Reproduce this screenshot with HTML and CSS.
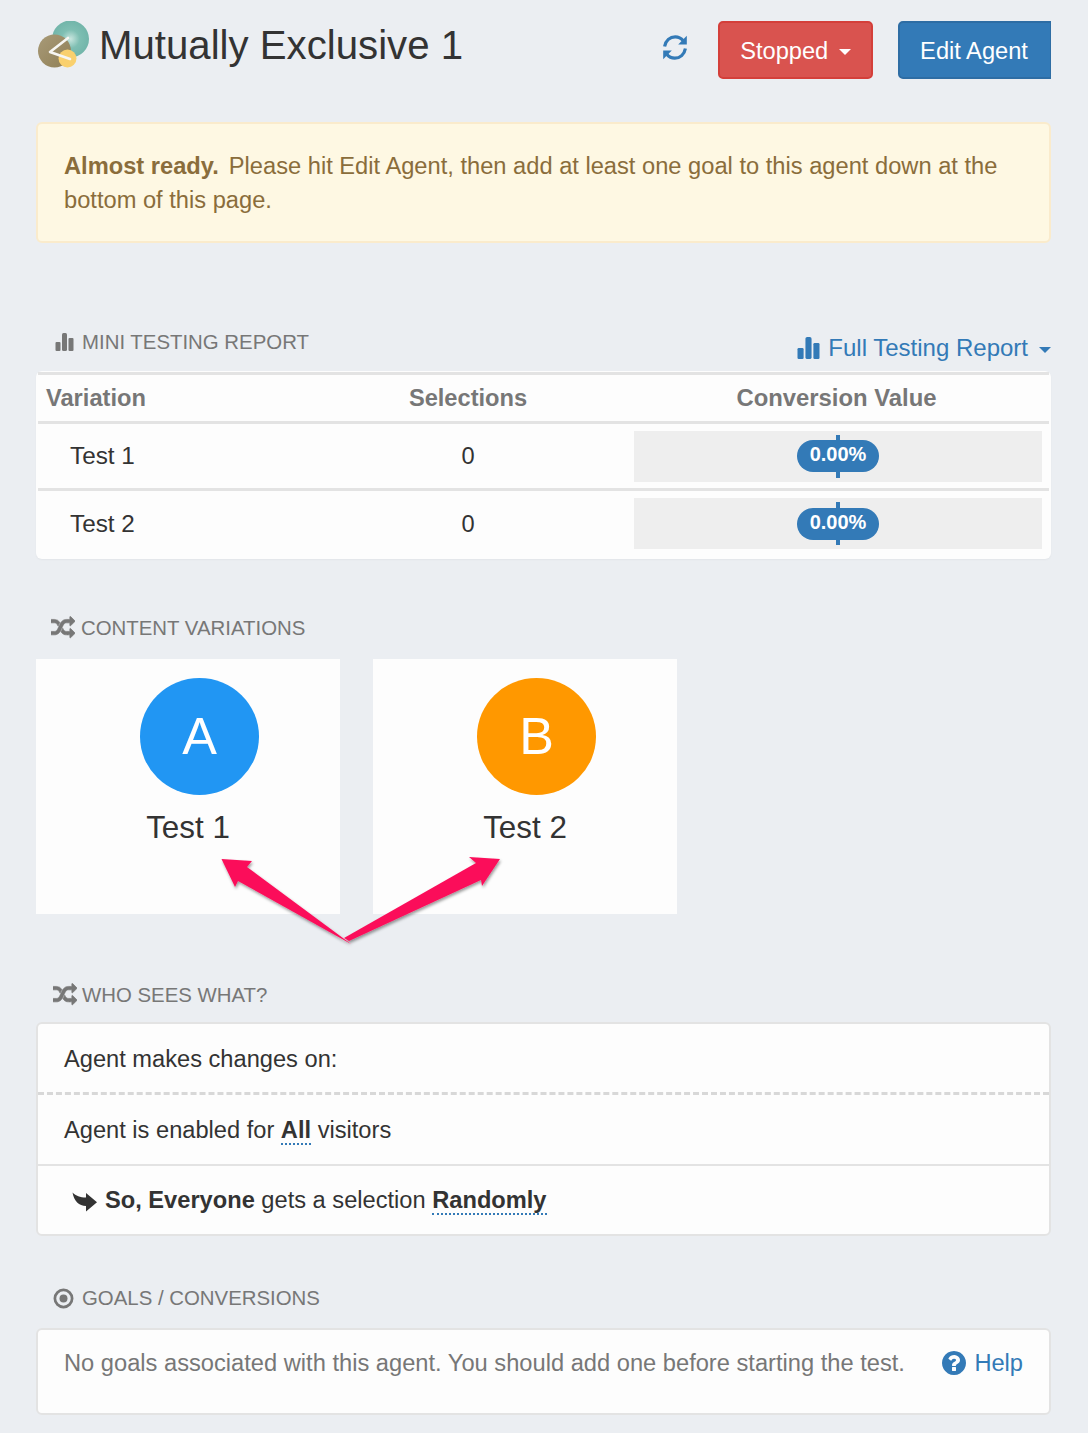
FILE: index.html
```html
<!DOCTYPE html>
<html lang="en">
<head>
<meta charset="utf-8">
<title>Mutually Exclusive 1</title>
<link rel="stylesheet" href="styles.css">
</head>
<body>
<main class="page">
  <header class="top">
    <svg class="logo" viewBox="0 0 56 50" aria-hidden="true">
      <defs>
        <radialGradient id="teal" cx=".5" cy=".5" r=".55"><stop offset="0" stop-color="#c9e6df"/><stop offset=".45" stop-color="#7fbfb3"/><stop offset="1" stop-color="#6fb3a8"/></radialGradient>
        <linearGradient id="tan" x1="0" y1="0" x2="1" y2="1"><stop offset="0" stop-color="#a89a78"/><stop offset="1" stop-color="#8f7f55"/></linearGradient>
      </defs>
      <circle cx="34.500" cy="18" r="18.500" fill="url(#teal)"/>
      <circle cx="18.500" cy="30" r="16.500" fill="url(#tan)"/>
      <circle cx="31.500" cy="37.500" r="9" fill="#f9d06e"/>
      <path d="M32 17 14 31 34 38" fill="none" stroke="#f6f6f2" stroke-width="2.600" stroke-linecap="round" stroke-linejoin="round"/>
    </svg>
    <h1 class="title">Mutually Exclusive 1</h1>
    <svg class="refresh" viewBox="0 0 24 25" aria-hidden="true">
      <path class="refresh-arc" d="M1.600 11.500C2.600 5.500 7 1.800 12.200 1.800c3.200 0 6 1.400 8 3.900"/>
      <path d="M23.800.8v8.600h-8.600z"/>
      <path class="refresh-arc" d="M22.400 13.500c-1 6-5.400 9.700-10.600 9.700-3.200 0-6-1.400-8-3.900"/>
      <path d="M.2 24.200v-8.600h8.600z"/>
    </svg>
    <button class="btn btn-red" type="button">Stopped <span class="caret"></span></button>
    <button class="btn btn-blue" type="button">Edit Agent</button>
  </header>

  <div class="alert"><strong class="alert-lead">Almost ready.</strong>Please hit Edit Agent, then add at least one goal to this agent down at the bottom of this page.</div>

  <div class="head head-report">
    <div class="label label-report">
      <svg class="ic-bars" viewBox="0 0 18 18" aria-hidden="true"><rect x="0" y="9" width="5" height="9" rx="1"/><rect x="6.500" y="0" width="5" height="18" rx="1.500"/><rect x="13" y="5" width="5" height="13" rx="1"/></svg>
      MINI TESTING REPORT
    </div>
    <a class="full-link">
      <svg class="ic-bars-lg" viewBox="0 0 18 18" aria-hidden="true"><rect x="0" y="9" width="5" height="9" rx="1"/><rect x="6.500" y="0" width="5" height="18" rx="1.500"/><rect x="13" y="5" width="5" height="13" rx="1"/></svg>
      Full Testing Report <span class="caret caret-link"></span>
    </a>
  </div>

  <section class="report">
    <table class="report-table">
      <colgroup><col class="c1"><col class="c2"><col class="c3"></colgroup>
      <thead>
        <tr><th class="left">Variation</th><th>Selections</th><th class="th-value">Conversion Value</th></tr>
      </thead>
      <tbody>
        <tr>
          <td class="name">Test 1</td><td class="sel">0</td>
          <td class="val"><div class="bar"><span class="tick"></span><span class="pill">0.00%</span></div></td>
        </tr>
        <tr>
          <td class="name">Test 2</td><td class="sel">0</td>
          <td class="val"><div class="bar"><span class="tick"></span><span class="pill">0.00%</span></div></td>
        </tr>
      </tbody>
    </table>
  </section>

  <div class="label label-content">
    <svg class="ic-random" viewBox="0 0 1792 1792" aria-hidden="true"><path d="M666 481q-60 92-137 273-22-45-37-72.500t-40.500-63.500-51-56.500-63-35-81.500-14.500h-224q-14 0-23-9t-9-23v-192q0-14 9-23t23-9h224q250 0 410 225zm1126 799q0 14-9 23l-320 320q-9 9-23 9-13 0-22.500-9.500t-9.500-22.500v-192q-32 0-85 .5t-81 1-73-1-71-5-64-10.500-63-18.500-58-28.500-59-40-55-53.500-56-69.500q59-93 136-273 22 45 37 72.500t40.500 63.500 51 56.500 63 35 81.500 14.500h256v-192q0-14 9-23t23-9q12 0 24 10l319 319q9 9 9 23zm0-896q0 14-9 23l-320 320q-9 9-23 9-13 0-22.500-9.500t-9.500-22.500v-192h-256q-48 0-87 15t-69 45-51 61.500-45 77.500q-32 62-78 171-29 66-49.500 111t-54 105-64 100-74 83-90 68.500-106.500 42-128 16.500h-224q-14 0-23-9t-9-23v-192q0-14 9-23t23-9h224q48 0 87-15t69-45 51-61.500 45-77.500q32-62 78-171 29-66 49.500-111t54-105 64-100 74-83 90-68.500 106.500-42 128-16.500h256v-192q0-14 9-23t23-9q12 0 24 10l319 319q9 9 9 23z"/></svg>
    CONTENT VARIATIONS
  </div>

  <section class="variations">
    <article class="vcard">
      <div class="circle circle-a">A</div>
      <div class="vname">Test 1</div>
    </article>
    <article class="vcard">
      <div class="circle circle-b">B</div>
      <div class="vname">Test 2</div>
    </article>
    <svg class="arrows" viewBox="216 854 300 95" aria-hidden="true">
      <defs><filter id="sh" x="-10%" y="-10%" width="120%" height="130%"><feDropShadow dx="1" dy="2" stdDeviation="1.500" flood-color="#000" flood-opacity=".4"/></filter></defs>
      <g fill="#fb0f5a" filter="url(#sh)">
        <path d="M221.500 859 252 861 247 867 351 944 238 881 235 887Z"/>
        <path d="M500 859 469 857 476 863 344 938 349 941 481 880 482 886Z"/>
      </g>
    </svg>
  </section>

  <div class="label label-who">
    <svg class="ic-random" viewBox="0 0 1792 1792" aria-hidden="true"><path d="M666 481q-60 92-137 273-22-45-37-72.500t-40.500-63.500-51-56.500-63-35-81.500-14.500h-224q-14 0-23-9t-9-23v-192q0-14 9-23t23-9h224q250 0 410 225zm1126 799q0 14-9 23l-320 320q-9 9-23 9-13 0-22.500-9.500t-9.500-22.500v-192q-32 0-85 .5t-81 1-73-1-71-5-64-10.500-63-18.500-58-28.500-59-40-55-53.500-56-69.500q59-93 136-273 22 45 37 72.500t40.500 63.500 51 56.500 63 35 81.500 14.500h256v-192q0-14 9-23t23-9q12 0 24 10l319 319q9 9 9 23zm0-896q0 14-9 23l-320 320q-9 9-23 9-13 0-22.500-9.500t-9.500-22.500v-192h-256q-48 0-87 15t-69 45-51 61.500-45 77.500q-32 62-78 171-29 66-49.500 111t-54 105-64 100-74 83-90 68.500-106.500 42-128 16.500h-224q-14 0-23-9t-9-23v-192q0-14 9-23t23-9h224q48 0 87-15t69-45 51-61.500 45-77.500q32-62 78-171 29-66 49.500-111t54-105 64-100 74-83 90-68.500 106.500-42 128-16.500h256v-192q0-14 9-23t23-9q12 0 24 10l319 319q9 9 9 23z"/></svg>
    WHO SEES WHAT?
  </div>

  <section class="panel">
    <div class="row row-dashed">Agent makes changes on:</div>
    <div class="row row-solid">Agent is enabled for <b class="dotted">All</b> visitors</div>
    <div class="row row-so">
      <svg class="ic-forward" viewBox="0 0 25 25" aria-hidden="true"><path d="M.5 2.500C4 6 8 7.500 14 7.500V3L25 12.300 14 21.500V16C7 16 2 11 .5 2.500Z"/></svg>
      <span><b>So, Everyone</b> gets a selection <b class="dotted">Randomly</b></span>
    </div>
  </section>

  <div class="label label-goals">
    <svg class="ic-dot" viewBox="0 0 20 20" aria-hidden="true"><circle cx="10" cy="10" r="8.200" fill="none" stroke-width="2.600"/><circle class="dot-in" cx="10" cy="10" r="3.800"/></svg>
    GOALS / CONVERSIONS
  </div>

  <section class="panel panel-goals">
    <span class="nogoals">No goals associated with this agent. You should add one before starting the test.</span>
    <a class="help">
      <svg class="ic-help" viewBox="128 128 1536 1536" aria-hidden="true"><path d="M1024 1376v-192q0-14-9-23t-23-9h-192q-14 0-23 9t-9 23v192q0 14 9 23t23 9h192q14 0 23-9t9-23zm256-672q0-88-55.500-163t-138.500-116-170-41q-243 0-371 213-15 24 8 42l132 100q7 6 19 6 16 0 25-12 53-68 86-92 34-24 86-24 48 0 85.500 26t37.500 59q0 38-20 61t-68 45q-63 28-115.500 86.500t-52.500 125.500v36q0 14 9 23t23 9h192q14 0 23-9t9-23q0-19 21.500-49.500t54.500-49.500q32-18 49-28.500t46-35 44.500-48 28-60.500 12.500-81zm384 192q0 209-103 385.500t-279.500 279.500-385.500 103-385.500-103-279.500-279.500-103-385.500 103-385.500 279.500-279.500 385.500-103 385.500 103 279.500 279.500 103 385.500z"/></svg>
      Help
    </a>
  </section>
</main>
</body>
</html>
```
FILE: styles.css
```css
* { box-sizing: border-box; }
html, body { margin: 0; padding: 0; }
body {
  background: #ebeef2;
  color: #333;
  font-family: "Liberation Sans", Arial, sans-serif;
  font-size: 23.650px;
  line-height: 34px;
  overflow: hidden;
}
.page { width: 1088px; height: 1433px; padding: 0 37px 0 36px; }

/* Header */
.top { display: flex; align-items: flex-start; height: 122px; padding-top: 21px; }
.logo { width: 56px; height: 50px; margin: 0 7px 0 0; flex: none; }
.title { flex: 1; margin: 1px 0 0; font-size: 40.200px; font-weight: 400; line-height: 48px; color: #333; }
.refresh { width: 24px; height: 25px; fill: #337ab7; margin: 14px 31px 0 0; flex: none; }
.refresh-arc { fill: none; stroke: #337ab7; stroke-width: 3.200; }
.btn {
  height: 58px; border-radius: 5px; border: 2px solid; color: #fff;
  font: 400 23.650px/1 "Liberation Sans", Arial, sans-serif; padding: 3px 0 0; flex: none;
}
.btn-red { width: 155px; background: #d9534f; border-color: #d43f3a; margin-right: 25px; }
.btn-blue { width: 153px; padding-right: 2px; background: #337ab7; border-color: #2e6da4; border-right-width: 1px; border-radius: 5px 0 0 5px; }
.caret {
  display: inline-block; width: 0; height: 0; margin-left: 4px; vertical-align: middle;
  border-top: 6px solid #fff; border-left: 6px solid transparent; border-right: 6px solid transparent;
}

/* Alert */
.alert {
  height: 121px; padding: 25px 26px 0 26px; background: #fef8e3; border: 2px solid #faebcc;
  border-radius: 6px; color: #8a6d3b; font-size: 23.680px;
}
.alert-lead { margin-right: 10px; }

/* Labels */
.label { display: flex; align-items: center; color: #777; font-size: 20.400px; line-height: 26px; }
.head-report { display: flex; justify-content: space-between; align-items: flex-end; margin-top: 85px; height: 43px; }
.label-report { padding-left: 19px; margin-bottom: 16px; gap: 8px; }
.ic-bars { width: 19px; height: 18px; fill: #777; flex: none; }
.full-link { color: #337ab7; font-size: 24px; line-height: 34px; display: flex; align-items: center; margin-bottom: 6px; }
.ic-bars-lg { width: 23px; height: 22px; fill: #337ab7; margin-right: 8px; }
.caret-link { border-top-color: #337ab7; margin-left: 11px; margin-top: 4px; }

/* Report table */
.report { height: 188px; background: #fdfdfd; border-radius: 6px; padding: 1px 2px 0 2px; box-shadow: 0 1px 2px rgba(0,0,0,.04); }
.report-table { width: 100%; border-collapse: collapse; table-layout: fixed; }
.c1 { width: 270px; }
.c2 { width: 320px; }
.report-table th {
  height: 49px; border-top: 3px solid #e3e3e3; border-bottom: 3px solid #e3e3e3; color: #777;
  font-weight: 700; font-size: 23.650px; text-align: center; padding: 0;
}
.report-table th.left { text-align: left; padding-left: 8px; }
.report-table th.th-value { font-size: 23.850px; padding-right: 4px; }
.report-table td { height: 67px; padding: 0; border-bottom: 3px solid #e3e3e3; }
.report-table tbody tr:last-child td { border-bottom: 0; height: 67px; }
.name { padding-left: 32px !important; font-size: 24.300px; }
.sel { text-align: center; }
.val { padding: 0 7px 0 6px !important; }
.bar { position: relative; height: 51px; background: #eee; display: flex; align-items: center; justify-content: center; }
.pill {
  position: relative; display: block; width: 82px; height: 32px; border-radius: 16px; background: #337ab7;
  color: #fff; font: 700 20px/28px "Liberation Sans", Arial, sans-serif; text-align: center;
}
.tick { position: absolute; left: 50%; top: 4px; bottom: 4px; width: 4px; margin-left: -2px; background: #337ab7; }

/* Variations */
.label-content { margin-top: 55px; height: 28px; gap: 6px; padding-left: 15px; }
.ic-random { width: 24px; height: 24px; fill: #777; stroke: #777; stroke-width: 50; flex: none; }
.variations { position: relative; display: flex; gap: 33px; margin-top: 17px; height: 255px; }
.vcard { width: 304px; height: 255px; background: #fdfdfd; display: flex; flex-direction: column; align-items: flex-start; }
.circle {
  width: 119px; height: 117px; margin: 19px 0 0 104px; border-radius: 50%; color: #fff;
  font: 400 52px/117px "Liberation Sans", sans-serif; text-align: center;
}
.circle-a { background: #2196f3; }
.circle-b { background: #ff9800; }
.vname { width: 100%; text-align: center; margin-top: 15px; font-size: 31.400px; line-height: 36px; color: #333; }
.arrows { position: absolute; left: 180px; top: 195px; width: 300px; height: 95px; overflow: visible; }

/* Who */
.label-who { margin-top: 67px; height: 28px; gap: 5px; padding-left: 17px; }
.panel { background: #fdfdfd; border: 2px solid #e3e3e3; border-radius: 6px; margin-top: 13px; }
.row { height: 71px; padding: 0 0 0 26px; display: flex; align-items: center; gap: 8px; white-space: pre-wrap; }
.row-dashed { border-bottom: 3px dashed #d8d8d8; height: 71px; padding-top: 2px; }
.row-solid { border-bottom: 2px solid #e3e3e3; display: block; padding-top: 18px; }
.row-so { padding-left: 34px; height: 68px; }
.dotted { display: inline-block; line-height: 25px; border-bottom: 2px dotted #337ab7; }
.ic-forward { width: 25px; height: 25px; fill: #333; flex: none; margin-top: 4px; }

/* Goals */
.label-goals { margin-top: 48px; height: 28px; gap: 8px; padding-left: 17px; }
.ic-dot { width: 21px; height: 21px; stroke: #777; flex: none; }
.dot-in { fill: #777; stroke: none; }
.panel-goals { display: flex; justify-content: space-between; align-items: flex-start; height: 87px; margin-top: 16px; padding: 16px 26px 0 26px; color: #777; }
.nogoals { color: #777; font-size: 23.680px; }
.help { color: #337ab7; display: flex; align-items: center; gap: 8px; }
.ic-help { width: 24px; height: 24px; fill: #337ab7; }
```
